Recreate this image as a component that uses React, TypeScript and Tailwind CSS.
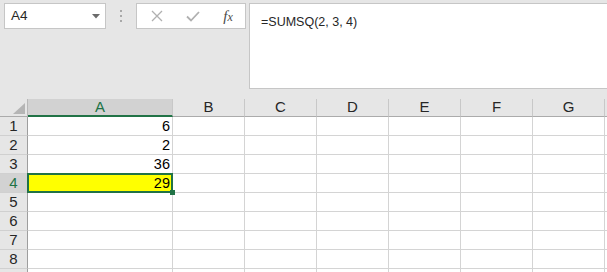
import React from "react";

const cols = ["A", "B", "C", "D", "E", "F", "G", ""];
const colW = [145, 72, 72, 72, 72, 72, 72, 72];
const values: Record<number, string> = { 1: "6", 2: "2", 3: "36", 4: "29" };

export default function App() {
  const rows = [1, 2, 3, 4, 5, 6, 7, 8, 9];
  return (
    <div
      className="w-[607px] h-[272px] overflow-hidden bg-[#e6e6e6] flex flex-col"
      style={{ fontFamily: '"Liberation Sans", Arial, sans-serif' }}
    >
      {/* Top bar */}
      <div className="flex items-start pt-[3px] h-[99px] shrink-0">
        <div className="ml-[4px] w-[102px] h-[26px] bg-white border border-[#c6c6c6] flex items-center justify-between pl-[6px] pr-[5px]">
          <span className="text-[13.5px] text-[#262626]">A4</span>
          <svg width="8" height="5" viewBox="0 0 8 5">
            <path d="M0 0 L8 0 L4 4.5 Z" fill="#6b6b6b" />
          </svg>
        </div>
        <div className="w-[30px] h-[26px] flex flex-col items-center justify-center gap-[3px]">
          <div className="w-[2px] h-[2px] bg-[#a8a8a8]" />
          <div className="w-[2px] h-[2px] bg-[#a8a8a8]" />
          <div className="w-[2px] h-[2px] bg-[#a8a8a8]" />
        </div>
        <div className="w-[110px] h-[26px] bg-white border border-[#c6c6c6] flex items-center">
          <div className="w-[38px] flex justify-center pl-[2px]">
            <svg width="12" height="12" viewBox="0 0 12 12">
              <path d="M1 1 L11 11 M11 1 L1 11" stroke="#b0b0b0" strokeWidth="1.3" />
            </svg>
          </div>
          <div className="w-[36px] flex justify-center">
            <svg width="14" height="11" viewBox="0 0 14 11">
              <path d="M1 5.5 L5 9.5 L13 1" stroke="#b0b0b0" strokeWidth="1.8" fill="none" />
            </svg>
          </div>
          <div className="w-[34px] flex justify-center">
            <span
              className="italic text-[15px] text-[#4a4a4a] leading-none"
              style={{ fontFamily: '"Liberation Serif", "Times New Roman", serif' }}
            >
              f<span className="text-[12px]">x</span>
            </span>
          </div>
        </div>
        <div className="ml-[3px] flex-1 h-[86px] bg-white border border-[#c6c6c6] border-r-0 pl-[11px] pt-[5px]">
          <span className="text-[12.5px] text-[#262626]">=SUMSQ(2, 3, 4)</span>
        </div>
      </div>

      {/* Grid */}
      <div className="flex flex-col">
        {/* Header row */}
        <div className="flex h-[18px]">
          <div className="w-[28px] shrink-0 border-r border-[#b8b8b8] border-b border-b-[#ababab] relative">
            <svg className="absolute right-[2px] bottom-[2px]" width="12" height="11" viewBox="0 0 12 11">
              <path d="M12 0 L12 11 L0 11 Z" fill="#b5b5b5" />
            </svg>
          </div>
          {cols.map((c, i) => (
            <div
              key={i}
              style={{ width: colW[i] }}
              className={
                "shrink-0 flex items-center justify-center text-[15px] border-r border-[#c8c8c8] " +
                (i === 0
                  ? "bg-[#d2d2d2] text-[#217346] border-b-2 border-b-[#217346]"
                  : "text-[#262626] border-b border-b-[#ababab]")
              }
            >
              {c}
            </div>
          ))}
        </div>
        {rows.map((r) => (
          <div key={r} className={"flex h-[19px] " + (r === 4 ? "relative z-10" : "")}>
            <div
              className={
                "w-[28px] shrink-0 flex items-center justify-center text-[15px] border-b border-[#d0d0d0] border-r " +
                (r === 4
                  ? "bg-[#d2d2d2] text-[#217346] border-r-[#217346]"
                  : "text-[#262626] border-r-[#9e9e9e]")
              }
            >
              {r < 9 ? r : ""}
            </div>
            {cols.map((c, i) => (
              <div
                key={i}
                style={{ width: colW[i] }}
                className={
                  "shrink-0 border-r border-b border-[#d4d4d4] flex items-end justify-end pr-[2px] text-[14.5px] text-black leading-[18px] relative " +
                  (i === 0 && r === 4 ? "bg-[#ffff00] z-10" : "bg-white")
                }
              >
                {i === 0 ? values[r] ?? "" : ""}
                {i === 0 && r === 4 && (
                  <>
                    <div className="absolute -left-[1px] -top-[1px] -right-[1px] -bottom-[1px] border-2 border-[#217346] pointer-events-none" />
                    <div className="absolute -right-[3px] -bottom-[3px] w-[5px] h-[5px] bg-[#217346]" />
                  </>
                )}
              </div>
            ))}
          </div>
        ))}
      </div>
    </div>
  );
}
